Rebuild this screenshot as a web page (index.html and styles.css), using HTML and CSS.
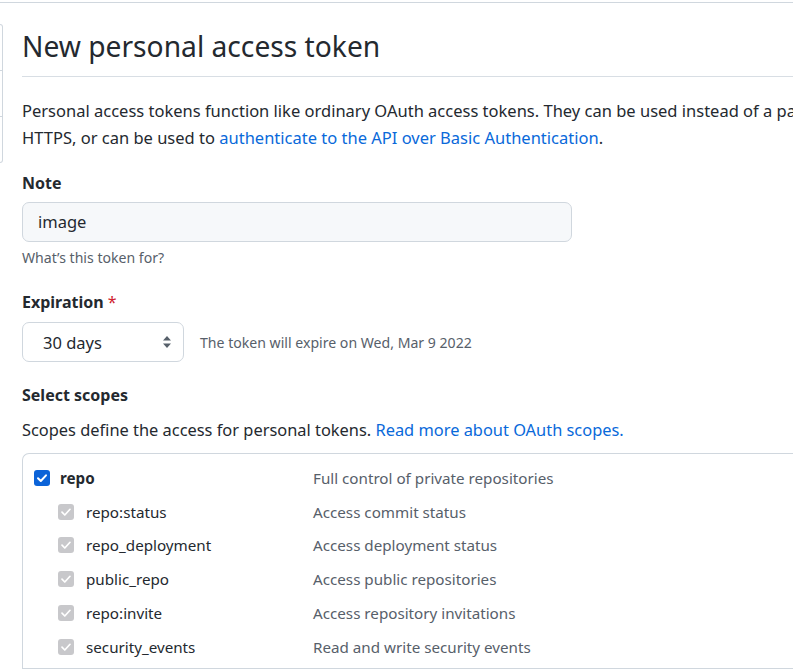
FILE: index.html
```html
<!DOCTYPE html>
<html lang="en">
<head>
<meta charset="utf-8">
<title>New personal access token</title>
<link rel="stylesheet" href="styles.css">
</head>
<body>
<div class="topbar"></div>
<div class="layout">
  <nav class="sidebar">
    <div class="side-item"></div>
    <div class="side-item"></div>
    <div class="side-item last"></div>
  </nav>
  <main class="content">
    <h1 class="title">New personal access token</h1>
    <p class="intro">Personal access tokens function like ordinary OAuth access tokens. They can be used instead of a password for Git over<br>HTTPS, or can be used to <a href="#">authenticate to the API over Basic Authentication</a>.</p>

    <label class="label label-note">Note</label>
    <div class="input">image</div>
    <p class="hint">What’s this token for?</p>

    <label class="label label-exp">Expiration <span class="req">*</span></label>
    <div class="exp-row">
      <div class="select">
        <span>30 days</span>
        <svg class="arrows" width="10" height="14" viewBox="0 0 10 14"><path d="M5 1 L9 5.5 H1 Z M5 13 L9 8.5 H1 Z" fill="#57606a"/></svg>
      </div>
      <span class="exp-note">The token will expire on Wed, Mar 9 2022</span>
    </div>

    <label class="label label-scopes">Select scopes</label>
    <p class="scopes-desc">Scopes define the access for personal tokens. <a href="#">Read more about OAuth scopes.</a></p>

    <div class="scopes">
      <div class="row">
        <div class="name">
          <span class="cb cb-on"><svg width="12" height="12" viewBox="0 0 12 12"><path d="M2 6.2 L4.8 9 L10 3.3" fill="none" stroke="#fff" stroke-width="2" stroke-linecap="round" stroke-linejoin="round"/></svg></span>
          <strong class="nm-top">repo</strong>
        </div>
        <div class="desc">Full control of private repositories</div>
      </div>
      <div class="row sub">
        <div class="name">
          <span class="cb cb-dis"><svg width="12" height="12" viewBox="0 0 12 12"><path d="M2 6.2 L4.8 9 L10 3.3" fill="none" stroke="#fff" stroke-width="1.7" stroke-linecap="round" stroke-linejoin="round"/></svg></span>
          <span class="nm">repo:status</span>
        </div>
        <div class="desc">Access commit status</div>
      </div>
      <div class="row sub">
        <div class="name">
          <span class="cb cb-dis"><svg width="12" height="12" viewBox="0 0 12 12"><path d="M2 6.2 L4.8 9 L10 3.3" fill="none" stroke="#fff" stroke-width="1.7" stroke-linecap="round" stroke-linejoin="round"/></svg></span>
          <span class="nm">repo_deployment</span>
        </div>
        <div class="desc">Access deployment status</div>
      </div>
      <div class="row sub">
        <div class="name">
          <span class="cb cb-dis"><svg width="12" height="12" viewBox="0 0 12 12"><path d="M2 6.2 L4.8 9 L10 3.3" fill="none" stroke="#fff" stroke-width="1.7" stroke-linecap="round" stroke-linejoin="round"/></svg></span>
          <span class="nm">public_repo</span>
        </div>
        <div class="desc">Access public repositories</div>
      </div>
      <div class="row sub">
        <div class="name">
          <span class="cb cb-dis"><svg width="12" height="12" viewBox="0 0 12 12"><path d="M2 6.2 L4.8 9 L10 3.3" fill="none" stroke="#fff" stroke-width="1.7" stroke-linecap="round" stroke-linejoin="round"/></svg></span>
          <span class="nm">repo:invite</span>
        </div>
        <div class="desc">Access repository invitations</div>
      </div>
      <div class="row sub">
        <div class="name">
          <span class="cb cb-dis"><svg width="12" height="12" viewBox="0 0 12 12"><path d="M2 6.2 L4.8 9 L10 3.3" fill="none" stroke="#fff" stroke-width="1.7" stroke-linecap="round" stroke-linejoin="round"/></svg></span>
          <span class="nm">security_events</span>
        </div>
        <div class="desc">Read and write security events</div>
      </div>
    </div>
  </main>
</div>
</body>
</html>
```

FILE: styles.css
```css
html, body {
  margin: 0;
  padding: 0;
  background: #ffffff;
  overflow: hidden;
}
body {
  font-family: "Noto Sans", "Open Sans", "Liberation Sans", sans-serif;
  color: #24292f;
  font-size: 16.5px;
  width: 793px;
  height: 670px;
}
.topbar {
  height: 2px;
  border-bottom: 1px solid #d0d7de;
}
.layout {
  display: flex;
  align-items: flex-start;
}
.sidebar {
  width: 2px;
  margin-top: 21px;
  border: 1px solid #d0d7de;
  border-left: none;
  border-radius: 0 7px 7px 0;
  flex-shrink: 0;
}
.side-item {
  height: 45px;
  border-bottom: 1px solid #d0d7de;
}
.side-item.last {
  border-bottom: none;
}
.content {
  margin-left: 19px;
  width: 1000px;
  flex-shrink: 0;
}
.title {
  margin: 24px 0 0;
  font-size: 28.2px;
  font-weight: 400;
  line-height: 38px;
  padding-bottom: 11px;
  border-bottom: 1px solid #d8dee4;
}
.intro {
  margin: 20px 0 0;
  line-height: 27px;
  white-space: nowrap;
}
a {
  color: #0969da;
  text-decoration: none;
}
.label {
  display: block;
  font-weight: 700;
  font-size: 16px;
  line-height: 27px;
}
.label-note {
  margin-top: 19px;
}
.input {
  margin-top: 5px;
  width: 518px;
  height: 38px;
  line-height: 38px;
  padding: 0 15px;
  background: #f6f8fa;
  border: 1px solid #d0d7de;
  border-radius: 7px;
}
.hint {
  margin: 6px 0 0;
  font-size: 14.1px;
  line-height: 20px;
  color: #57606a;
}
.label-exp {
  margin-top: 21px;
}
.req {
  color: #cf222e;
  font-weight: 400;
}
.exp-row {
  display: flex;
  align-items: center;
  gap: 16px;
  margin-top: 6px;
}
.select {
  width: 162px;
  height: 40px;
  box-sizing: border-box;
  border: 1px solid #d0d7de;
  border-radius: 7px;
  display: flex;
  align-items: center;
  justify-content: space-between;
  padding: 0 11px 0 20px;
  background: #fff;
}
.arrows {
  display: block;
}
.exp-note {
  font-size: 14.1px;
  color: #57606a;
}
.label-scopes {
  margin-top: 20px;
}
.scopes-desc {
  margin: 7px 0 0;
  font-size: 16.4px;
  line-height: 27px;
}
.scopes {
  margin-top: 10px;
  border: 1px solid #d0d7de;
  border-right: none;
  border-radius: 7px 0 0 0;
  padding: 7px 0 4px 11px;
  font-size: 15.2px;
}
.row {
  display: flex;
  align-items: center;
  height: 33.8px;
}
.name {
  width: 279px;
  display: flex;
  align-items: center;
}
.row.sub .name {
  padding-left: 24px;
  width: 255px;
}
.cb {
  width: 16px;
  height: 16px;
  border-radius: 3px;
  display: inline-flex;
  align-items: center;
  justify-content: center;
  flex-shrink: 0;
}
.cb-on {
  background: #0b63d8;
}
.cb-dis {
  background: #c8c8cb;
}
.nm-top {
  margin-left: 10px;
  font-weight: 700;
}
.nm {
  margin-left: 12px;
}
.desc {
  color: #57606a;
}
```
